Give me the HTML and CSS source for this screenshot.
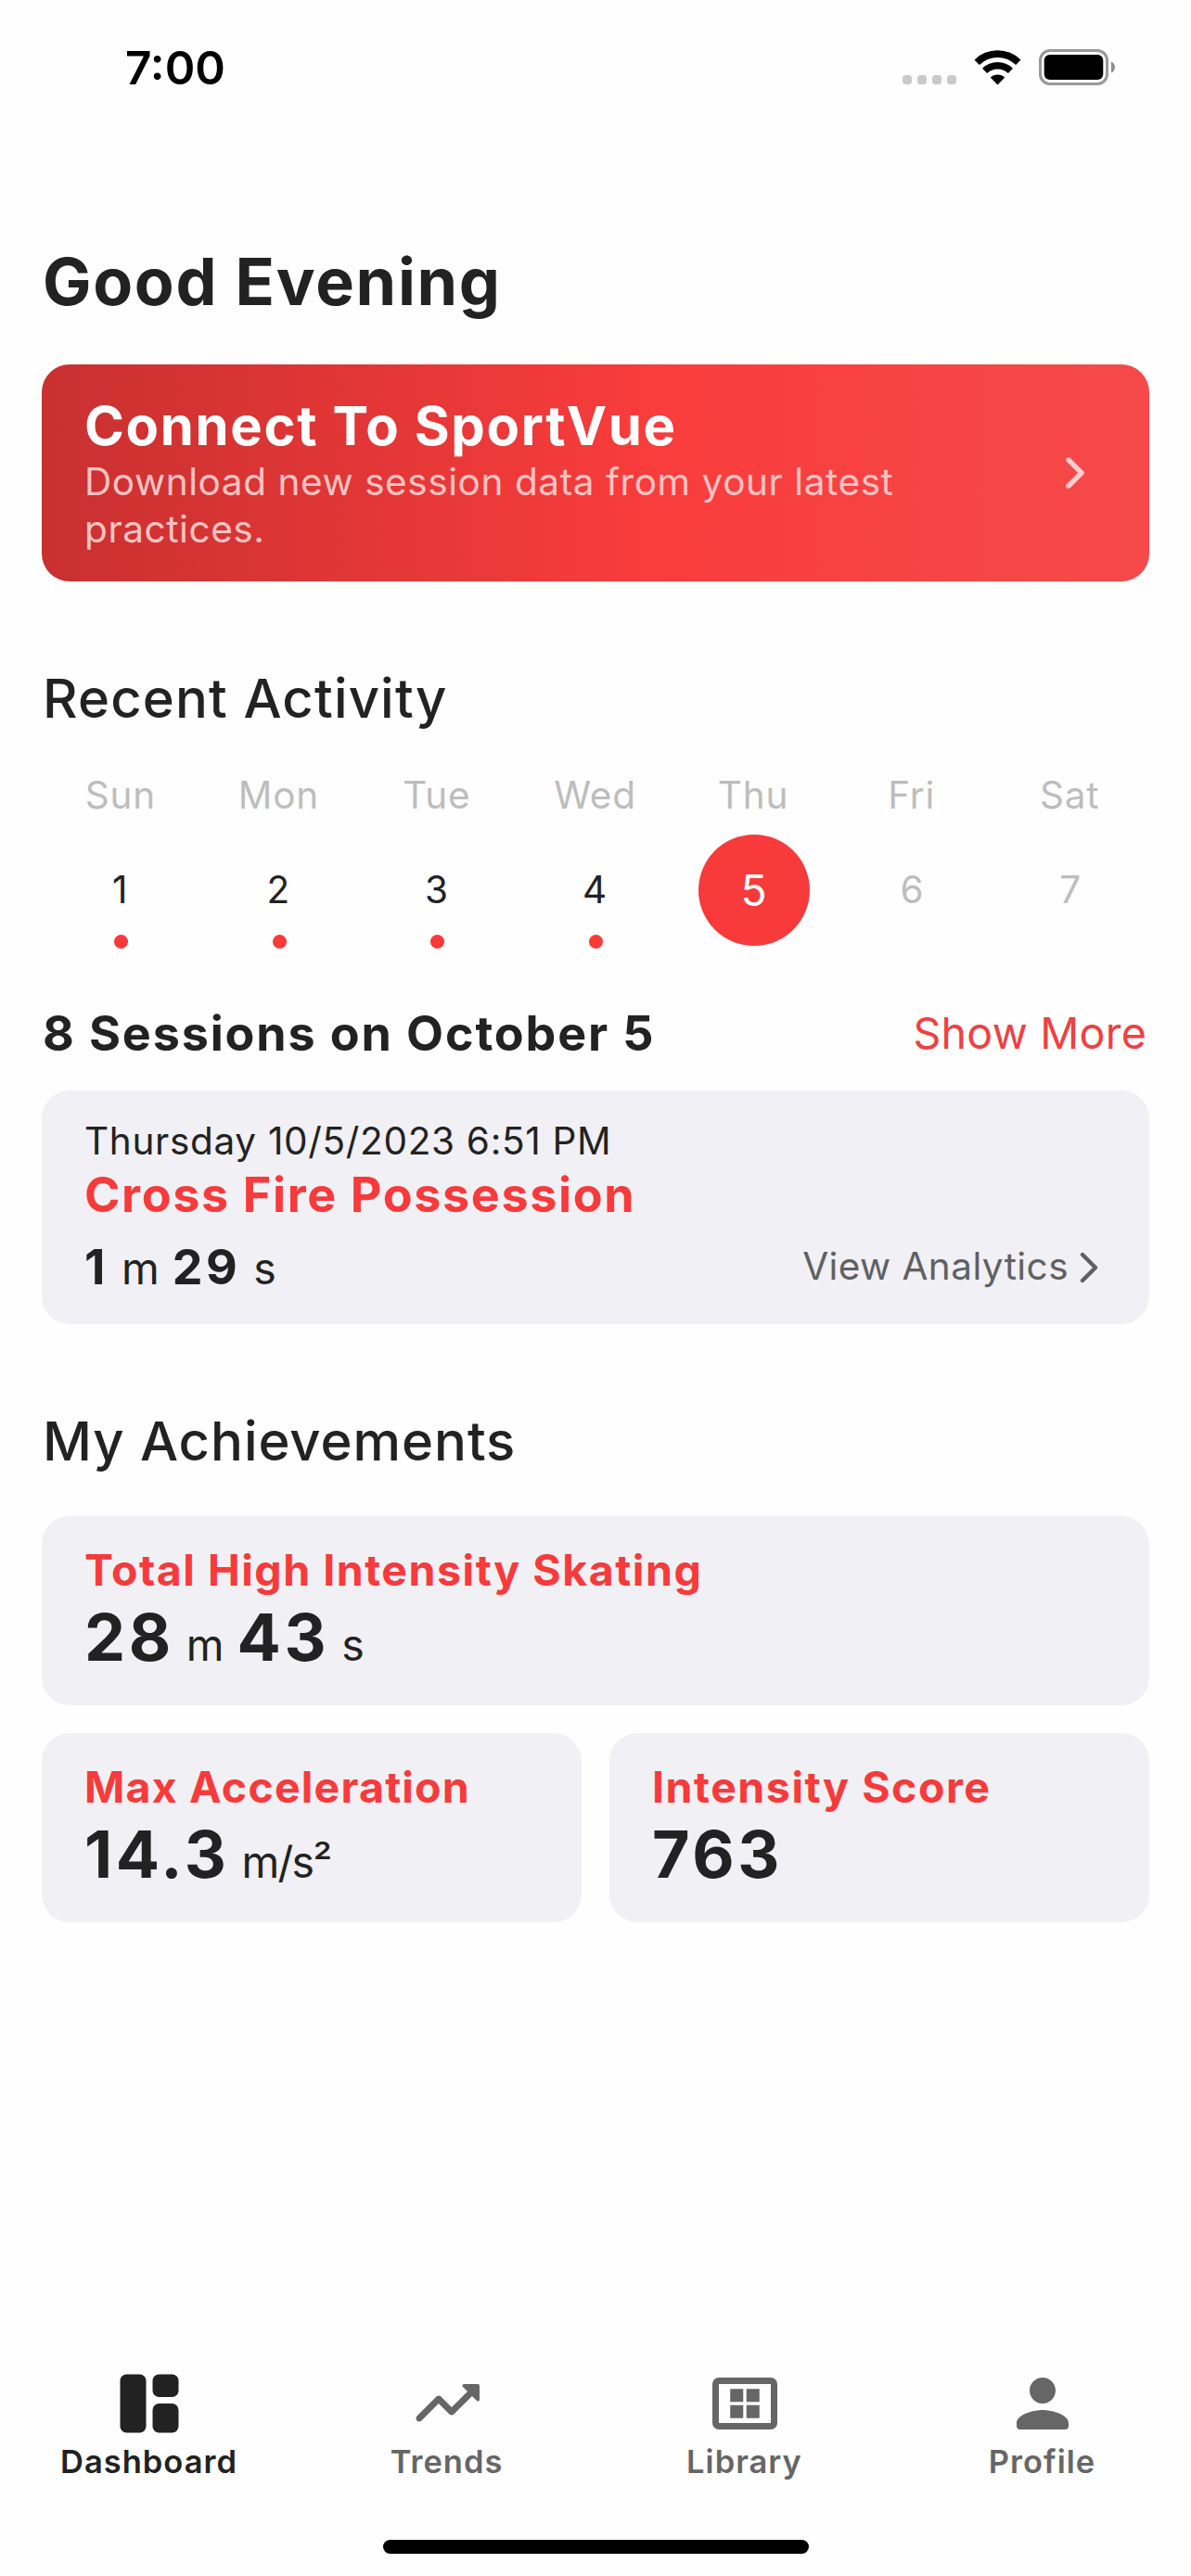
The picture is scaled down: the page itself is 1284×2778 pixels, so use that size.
FILE: index.html
```html
<!DOCTYPE html>
<html lang="en">
<head>
<meta charset="utf-8">
<title>Dashboard</title>
<link rel="stylesheet" href="styles.css">
</head>
<body>
<header class="status">
  <span class="status-time">7:00</span>
  <div class="status-icons">
    <svg class="signal" width="58" height="10" viewBox="0 0 58 10" fill="#c9c9c9"><rect width="10" height="10" rx="3.5"/><rect x="16" width="10" height="10" rx="3.5"/><rect x="32" width="10" height="10" rx="3.5"/><rect x="48" width="10" height="10" rx="3.5"/></svg>
    <svg class="wifi" width="51" height="38" viewBox="0 0 51 38"><path d="M3.2 13.2a32 32 0 0 1 44.6 0" fill="none" stroke="#000" stroke-width="7.6"/><path d="M11.6 22.3a20 20 0 0 1 27.8 0" fill="none" stroke="#000" stroke-width="7.4"/><path d="M25.500 37.500 17.700 29.600a11.200 11.200 0 0 1 15.600 0z"/></svg>
    <svg class="battery" width="82" height="39" viewBox="0 0 82 39"><rect x="1.500" y="1.500" width="72" height="36" rx="10.500" fill="none" stroke="#999" stroke-width="3"/><rect x="5.700" y="6" width="63.600" height="27" rx="6"/><path d="M78 13.500c5.300 2.200 5.300 9.800 0 12z" fill="#8c8c8c"/></svg>
  </div>
</header>

<main class="content">
  <h1 class="greeting">Good Evening</h1>

  <a class="banner">
    <div class="banner-text">
      <h2 class="banner-title">Connect To SportVue</h2>
      <p class="banner-sub">Download new session data from your latest practices.</p>
    </div>
    <svg class="banner-chevron" width="20" height="34" viewBox="0 0 20 34" fill="none" stroke="#ffcdcd" stroke-width="5.400" stroke-linecap="round" stroke-linejoin="round"><path d="M3 3l14 14L3 31"/></svg>
  </a>

  <h2 class="section-title activity">Recent Activity</h2>
  <div class="week">
    <div class="day"><span class="name">Sun</span><span class="num marked">1</span></div>
    <div class="day"><span class="name">Mon</span><span class="num marked">2</span></div>
    <div class="day"><span class="name">Tue</span><span class="num marked">3</span></div>
    <div class="day"><span class="name">Wed</span><span class="num marked">4</span></div>
    <div class="day"><span class="name">Thu</span><span class="num today">5</span></div>
    <div class="day"><span class="name">Fri</span><span class="num future">6</span></div>
    <div class="day"><span class="name">Sat</span><span class="num future">7</span></div>
  </div>

  <div class="sessions-head">
    <h3 class="sessions-title">8 Sessions on October 5</h3>
    <a class="show-more">Show More</a>
  </div>
  <article class="card session">
    <p class="session-date">Thursday 10/5/2023 6:51 PM</p>
    <h4 class="session-name">Cross Fire Possession</h4>
    <div class="session-foot">
      <div class="duration"><b>1</b><span>m</span><b>29</b><span>s</span></div>
      <a class="analytics">View Analytics<svg width="20" height="34" viewBox="0 0 20 34" fill="none" stroke="#606063" stroke-width="4.400" stroke-linecap="round" stroke-linejoin="round"><path d="M3 3l14 14L3 31"/></svg></a>
    </div>
  </article>

  <h2 class="section-title achievements">My Achievements</h2>
  <div class="stats">
    <article class="card stat wide"><h4 class="stat-name">Total High Intensity Skating</h4><div class="stat-value"><b>28</b><span>m</span><b>43</b><span>s</span></div></article>
    <article class="card stat"><h4 class="stat-name accel">Max Acceleration</h4><div class="stat-value"><b>14.3</b><span class="unit">m/s²</span></div></article>
    <article class="card stat"><h4 class="stat-name">Intensity Score</h4><div class="stat-value"><b>763</b></div></article>
  </div>
</main>

<nav class="tabs">
  <a class="tab active"><svg viewBox="0 0 24 24"><rect x="3" y="3" width="8" height="18" rx="2"/><rect x="13" y="3" width="8" height="7" rx="2"/><rect x="13" y="12" width="8" height="9" rx="2"/></svg>Dashboard</a>
  <a class="tab"><svg viewBox="0 0 24 24"><path d="M16.850 6.850l1.440 1.440-4.880 4.880-3.290-3.290c-.39-.39-1.020-.39-1.410 0l-6 6.010c-.39.39-.39 1.020 0 1.410.39.39 1.020.39 1.410 0L9.410 12l3.290 3.290c.39.39 1.020.39 1.410 0l5.590-5.580 1.440 1.440c.31.31.85.09.85-.35V6.500c.01-.28-.21-.5-.49-.5h-4.290c-.45 0-.67.54-.36.850z"/></svg>Trends</a>
  <a class="tab"><svg viewBox="0 0 24 24"><path fill-rule="evenodd" d="M4 4h16a2 2 0 0 1 2 2v12a2 2 0 0 1-2 2H4a2 2 0 0 1-2-2V6a2 2 0 0 1 2-2zm0 2v12h16V6z"/><path d="M7.500 7.500h4v4h-4zM12.500 7.500h4v4h-4zM7.500 12.500h4v4h-4zM12.500 12.500h4v4h-4z"/></svg>Library</a>
  <a class="tab"><svg viewBox="0 0 24 24"><path d="M12 12c2.210 0 4-1.790 4-4s-1.790-4-4-4-4 1.790-4 4 1.790 4 4 4zm0 2c-2.670 0-8 1.340-8 4v1c0 .55.45 1 1 1h14c.55 0 1-.45 1-1v-1c0-2.660-5.330-4-8-4z"/></svg>Profile</a>
</nav>
<div class="home-indicator"></div>
</body>
</html>
```
FILE: styles.css
```css
* { box-sizing: border-box; margin: 0; padding: 0; }

body {
  display: flex;
  flex-direction: column;
  width: 1284px;
  height: 2778px;
  overflow: hidden;
  background: #fefefe;
  color: #222;
  font-family: Inter, "Liberation Sans", sans-serif;
}

svg { display: block; flex: none; }
h1, h2, h3, h4, b { font-weight: 700; }

/* status bar */
.status {
  display: flex;
  justify-content: space-between;
  align-items: flex-start;
  height: 262px;
  padding: 43px 82px 0 135px;
  color: #000;
}
.status-time { font-size: 49.5px; line-height: 60px; font-weight: 600; }
.status-icons { display: flex; align-items: flex-end; height: 49px; }
.signal { margin-bottom: 1px; }
.wifi { margin-left: 19px; }
.battery { margin-left: 19px; }

.content { padding: 0 45px; }
.greeting { padding-left: 1px; font-size: 70px; line-height: 84px; letter-spacing: 1.7px; }

/* connect banner */
.banner {
  display: flex;
  justify-content: space-between;
  align-items: center;
  height: 234px;
  margin-top: 47px;
  padding: 0 70px 0 46px;
  border-radius: 30px;
  background: linear-gradient(90deg, #c93030 0%, #f93c3c 55%, #f64a4a 100%);
}
.banner-text { width: 920px; }
.banner-title { color: #fff; font-size: 58px; line-height: 70px; letter-spacing: 1.63px; }
.banner-sub { color: #fcc3c3; font-size: 40.5px; line-height: 51px; letter-spacing: .58px; }

.section-title { padding-left: 1px; font-size: 58px; line-height: 70px; font-weight: 500; }
.activity { margin-top: 91px; letter-spacing: 1.15px; }
.achievements { margin-top: 91px; letter-spacing: .95px; }

/* week strip */
.week { display: grid; grid-template-columns: repeat(7, 1fr); margin-top: 45px; }
.day { display: flex; flex-direction: column; align-items: center; }
.name { margin-left: -1px; color: #bdbdbd; font-size: 40.5px; line-height: 50px; letter-spacing: .8px; }
.num {
  position: relative;
  width: 120px;
  height: 120px;
  margin-top: 17px;
  font-size: 40.5px;
  line-height: 120px;
  text-align: center;
}
.marked { padding-right: 2px; }
.marked::after {
  content: "";
  position: absolute;
  left: 53px;
  top: 108px;
  width: 15px;
  height: 15px;
  border-radius: 50%;
  background: #f83a3a;
}
.today { border-radius: 50%; background: #f83a3a; color: #fff; font-size: 46.5px; }
.future { color: #bdbdbd; }

/* sessions */
.sessions-head {
  display: flex;
  justify-content: space-between;
  align-items: center;
  margin-top: 64px;
  padding: 0 3px 0 1px;
}
.sessions-title { font-size: 52px; line-height: 62px; letter-spacing: 1.87px; }
.show-more { padding-bottom: 1px; color: #f04040; font-size: 46.5px; line-height: 61px; letter-spacing: .25px; }

.card { border-radius: 30px; background: #f1f0f5; }
.session { height: 252px; margin-top: 30px; padding: 30px 55px 0 46px; }
.session-date { font-size: 40.5px; line-height: 50px; letter-spacing: .68px; }
.session-name { margin-top: 2px; color: #f83a3a; font-size: 52px; line-height: 62px; letter-spacing: 1.65px; }
.session-foot { display: flex; justify-content: space-between; align-items: center; margin-top: 16px; }
.duration { display: flex; align-items: baseline; font-size: 46.5px; line-height: 62px; }
.duration b { font-size: 52px; letter-spacing: 3.5px; }
.duration span { margin: 0 14px 0 14px; }
.analytics { display: flex; align-items: center; gap: 12px; color: #606063; font-size: 40.5px; line-height: 50px; letter-spacing: .44px; margin-bottom: 4px; }
.analytics svg { margin-top: 3px; }

/* achievements */
.stats { display: grid; grid-template-columns: 1fr 1fr; gap: 30px; margin-top: 46px; }
.stat { height: 204px; padding: 30px 46px 0; }
.wide { grid-column: span 2; }
.stat-name { color: #f83a3a; font-size: 46.5px; line-height: 56px; letter-spacing: 1.52px; }
.accel { letter-spacing: 1.18px; }
.stat-value { display: flex; align-items: baseline; margin-top: 3px; font-size: 46.5px; line-height: 84px; }
.stat-value b { font-size: 70px; letter-spacing: 3.6px; }
.stat-value span { margin: 0 14px 0 13px; }
.stat-value .unit { letter-spacing: -1.7px; }

/* bottom navigation */
.tabs { display: grid; grid-template-columns: repeat(4, 1fr); margin-top: auto; }
.tab {
  display: flex;
  flex-direction: column;
  align-items: center;
  color: #666;
  font-size: 34.5px;
  line-height: 42px;
  font-weight: 600;
  letter-spacing: 1px;
}
.tab svg { width: 84px; height: 84px; fill: currentColor; }
.active { color: #222; }
.home-indicator { flex: none; width: 459px; height: 15px; margin: 63px auto 24px; border-radius: 8px; background: #000; }
```
